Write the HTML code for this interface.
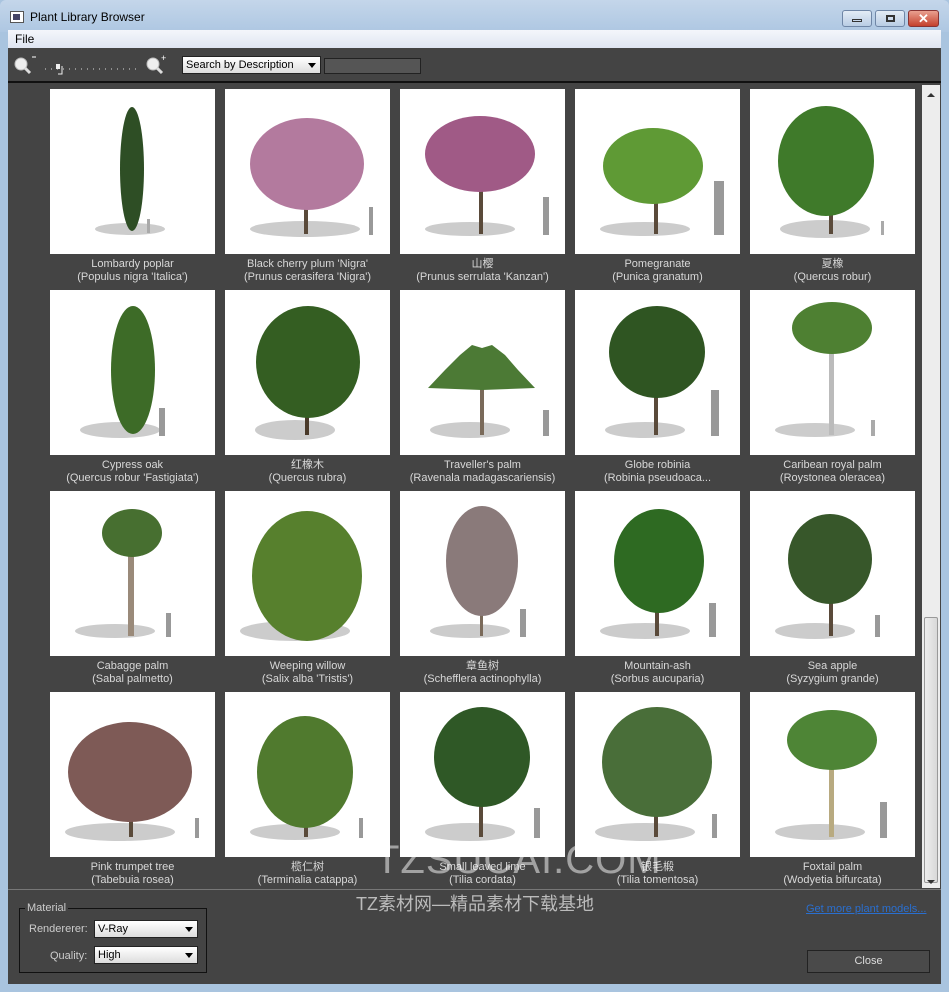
<!DOCTYPE html>
<html><head><meta charset="utf-8"><style>
*{margin:0;padding:0;box-sizing:border-box}
body{width:949px;height:992px;background:#a9c4df;font-family:"Liberation Sans","Noto Sans CJK SC",sans-serif;position:relative;overflow:hidden}
.a{position:absolute}
.title{left:0;top:0;width:949px;height:32px;background:linear-gradient(#c4d6ea,#aec7e2);border-radius:6px 6px 0 0}
.menu{left:8px;top:30px;width:933px;height:18px;background:linear-gradient(#f4f6fb,#dfe5f1);font-size:12px;padding:2px 0 0 7px;color:#000}
.main{left:8px;top:48px;width:933px;height:936px;background:#444}
.tile{position:absolute;width:165px;height:165px;background:#fff;overflow:hidden}
.lab{position:absolute;width:185px;text-align:center;color:#d8d8d8;font-size:11px;line-height:13px}
.sel{background:linear-gradient(#fff,#ddd);border:1px solid #222;color:#000;font-size:11px;padding:2px 3px;height:18px}
.arr{position:absolute;right:4px;top:6px;border-left:4px solid transparent;border-right:4px solid transparent;border-top:5px solid #000}
</style></head><body>
<div class="a title"></div>
<div class="a" style="left:10px;top:11px;width:14px;height:12px;background:#fff;border:1px solid #555"><div style="width:7px;height:6px;background:#446;margin:2px"></div></div>
<div class="a" style="left:30px;top:10px;font-size:12px;color:#000">Plant Library Browser</div>
<div class="a" style="left:842px;top:10px;width:30px;height:17px;border:1px solid #6f86a6;border-radius:3px;background:linear-gradient(#e3ecf6,#b9cde4)"><div style="width:10px;height:3px;border:1px solid #333;margin:8px auto"></div></div>
<div class="a" style="left:875px;top:10px;width:30px;height:17px;border:1px solid #6f86a6;border-radius:3px;background:linear-gradient(#e3ecf6,#b9cde4)"><div style="width:9px;height:7px;border:2px solid #333;margin:4px auto"></div></div>
<div class="a" style="left:908px;top:10px;width:31px;height:17px;border:1px solid #833;border-radius:3px;background:linear-gradient(#e9a090,#c4402c);color:#fff;font-size:13px;font-weight:bold;text-align:center;line-height:15px">✕</div>
<div class="a menu">File</div>
<div class="a main"></div>
<div class="a" style="left:8px;top:81px;width:933px;height:2px;background:#111"></div>
<!-- toolbar -->
<svg class="a" style="left:12px;top:54px" width="160" height="24"><circle cx="9" cy="10" r="6" fill="#eee" stroke="#bbb"/><line x1="13" y1="14" x2="18" y2="19" stroke="#ddd" stroke-width="3"/><line x1="20" y1="3" x2="24" y2="3" stroke="#fff"/>
<line x1="33" y1="15" x2="124" y2="15" stroke="#ddd" stroke-dasharray="1 5"/><rect x="44" y="10" width="4" height="5" fill="#eee"/><path d="M50 12 V20 H46" stroke="#eee" fill="none"/>
<circle cx="141" cy="10" r="6" fill="#eee" stroke="#bbb"/><line x1="145" y1="14" x2="150" y2="19" stroke="#ddd" stroke-width="3"/><text x="149" y="7" fill="#fff" font-size="9">+</text>
<line x1="166" y1="4" x2="166" y2="22" stroke="#ccc"/></svg>
<div class="a sel" style="left:182px;top:56px;width:139px;">Search by Description<div class="arr"></div></div>
<div class="a" style="left:324px;top:58px;width:97px;height:16px;background:#555;border:1px solid #222"></div>
<!-- scrollbar -->
<div class="a" style="left:922px;top:85px;width:18px;height:803px;background:#ededed"></div>
<div class="a" style="left:924px;top:617px;width:14px;height:266px;background:linear-gradient(90deg,#eee,#d8d8d8);border:1px solid #999;border-radius:2px"></div>
<div class="a" style="left:927px;top:93px;border-left:4px solid transparent;border-right:4px solid transparent;border-bottom:4px solid #333"></div>
<div class="a" style="left:927px;top:880px;border-left:4px solid transparent;border-right:4px solid transparent;border-top:4px solid #333"></div>
<div class="a" style="left:8px;top:889px;width:933px;height:1px;background:#777"></div>

<div class="a" style="left:0;top:0">
<!-- row1 -->
<div class="tile" style="left:50px;top:89px"><svg width="165" height="165"><ellipse cx="80" cy="140" rx="35" ry="6" fill="#ccc"/><ellipse cx="82" cy="80" rx="12" ry="62" fill="#2e4e25"/><rect x="97" y="130" width="3" height="14" fill="#aaa"/></svg></div>
<div class="tile" style="left:225px;top:89px"><svg width="165" height="165"><ellipse cx="80" cy="140" rx="55" ry="8" fill="#ccc"/><rect x="79" y="90" width="4" height="55" fill="#5a4a3a"/><ellipse cx="82" cy="75" rx="57" ry="46" fill="#b37a9e"/><rect x="144" y="118" width="4" height="28" fill="#999"/></svg></div>
<div class="tile" style="left:400px;top:89px"><svg width="165" height="165"><ellipse cx="70" cy="140" rx="45" ry="7" fill="#ccc"/><rect x="79" y="90" width="4" height="55" fill="#5a4a3a"/><ellipse cx="80" cy="65" rx="55" ry="38" fill="#a05a86"/><rect x="143" y="108" width="6" height="38" fill="#999"/></svg></div>
<div class="tile" style="left:575px;top:89px"><svg width="165" height="165"><ellipse cx="70" cy="140" rx="45" ry="7" fill="#ccc"/><rect x="79" y="90" width="4" height="55" fill="#5a4a3a"/><ellipse cx="78" cy="77" rx="50" ry="38" fill="#5f9a35"/><rect x="139" y="92" width="10" height="54" fill="#999"/></svg></div>
<div class="tile" style="left:750px;top:89px"><svg width="165" height="165"><ellipse cx="75" cy="140" rx="45" ry="9" fill="#ccc"/><rect x="79" y="90" width="4" height="55" fill="#5a4a3a"/><ellipse cx="76" cy="72" rx="48" ry="55" fill="#3f7a2a"/><rect x="131" y="132" width="3" height="14" fill="#aaa"/></svg></div>
<!-- row2 -->
<div class="tile" style="left:50px;top:290px"><svg width="165" height="165"><ellipse cx="70" cy="140" rx="40" ry="8" fill="#ccc"/><ellipse cx="83" cy="80" rx="22" ry="64" fill="#3d6b27"/><rect x="109" y="118" width="6" height="28" fill="#999"/></svg></div>
<div class="tile" style="left:225px;top:290px"><svg width="165" height="165"><ellipse cx="70" cy="140" rx="40" ry="10" fill="#ccc"/><rect x="80" y="90" width="4" height="55" fill="#4a3a2a"/><ellipse cx="83" cy="72" rx="52" ry="56" fill="#345e22"/></svg></div>
<div class="tile" style="left:400px;top:290px"><svg width="165" height="165"><ellipse cx="70" cy="140" rx="40" ry="8" fill="#ccc"/><rect x="80" y="95" width="4" height="50" fill="#7a6a5a"/><path d="M82 100 L28 98 L45 80 L60 65 L72 55 L82 58 L92 55 L105 65 L118 80 L135 98Z" fill="#4c7a35"/><rect x="143" y="120" width="6" height="26" fill="#999"/></svg></div>
<div class="tile" style="left:575px;top:290px"><svg width="165" height="165"><ellipse cx="70" cy="140" rx="40" ry="8" fill="#ccc"/><rect x="79" y="90" width="4" height="55" fill="#5a4a3a"/><ellipse cx="82" cy="62" rx="48" ry="46" fill="#2f5522"/><rect x="136" y="100" width="8" height="46" fill="#999"/></svg></div>
<div class="tile" style="left:750px;top:290px"><svg width="165" height="165"><ellipse cx="65" cy="140" rx="40" ry="7" fill="#ccc"/><rect x="79" y="45" width="5" height="100" fill="#bbb"/><ellipse cx="82" cy="38" rx="40" ry="26" fill="#4e8032"/><rect x="121" y="130" width="4" height="16" fill="#aaa"/></svg></div>
<!-- row3 -->
<div class="tile" style="left:50px;top:491px"><svg width="165" height="165"><ellipse cx="65" cy="140" rx="40" ry="7" fill="#ccc"/><rect x="78" y="45" width="6" height="100" fill="#9a8a7a"/><ellipse cx="82" cy="42" rx="30" ry="24" fill="#476f30"/><rect x="116" y="122" width="5" height="24" fill="#999"/></svg></div>
<div class="tile" style="left:225px;top:491px"><svg width="165" height="165"><ellipse cx="70" cy="140" rx="55" ry="10" fill="#ccc"/><rect x="80" y="90" width="4" height="55" fill="#5a4a3a"/><ellipse cx="82" cy="85" rx="55" ry="65" fill="#57802d"/></svg></div>
<div class="tile" style="left:400px;top:491px"><svg width="165" height="165"><ellipse cx="70" cy="140" rx="40" ry="7" fill="#ccc"/><rect x="80" y="80" width="3" height="65" fill="#7a6a5a"/><ellipse cx="82" cy="70" rx="36" ry="55" fill="#8a7a7a"/><rect x="120" y="118" width="6" height="28" fill="#999"/></svg></div>
<div class="tile" style="left:575px;top:491px"><svg width="165" height="165"><ellipse cx="70" cy="140" rx="45" ry="8" fill="#ccc"/><rect x="80" y="90" width="4" height="55" fill="#5a4a3a"/><ellipse cx="84" cy="70" rx="45" ry="52" fill="#2e6a22"/><rect x="134" y="112" width="7" height="34" fill="#999"/></svg></div>
<div class="tile" style="left:750px;top:491px"><svg width="165" height="165"><ellipse cx="65" cy="140" rx="40" ry="8" fill="#ccc"/><rect x="79" y="90" width="4" height="55" fill="#5a4a3a"/><ellipse cx="80" cy="68" rx="42" ry="45" fill="#37572a"/><rect x="125" y="124" width="5" height="22" fill="#999"/></svg></div>
<!-- row4 -->
<div class="tile" style="left:50px;top:692px"><svg width="165" height="165"><ellipse cx="70" cy="140" rx="55" ry="9" fill="#ccc"/><rect x="79" y="90" width="4" height="55" fill="#5a4a3a"/><ellipse cx="80" cy="80" rx="62" ry="50" fill="#7e5a56"/><rect x="145" y="126" width="4" height="20" fill="#999"/></svg></div>
<div class="tile" style="left:225px;top:692px"><svg width="165" height="165"><ellipse cx="70" cy="140" rx="45" ry="8" fill="#ccc"/><rect x="79" y="70" width="4" height="75" fill="#5a4a3a"/><ellipse cx="80" cy="80" rx="48" ry="56" fill="#507a2e"/><rect x="134" y="126" width="4" height="20" fill="#999"/></svg></div>
<div class="tile" style="left:400px;top:692px"><svg width="165" height="165"><ellipse cx="70" cy="140" rx="45" ry="9" fill="#ccc"/><rect x="79" y="90" width="4" height="55" fill="#5a4a3a"/><ellipse cx="82" cy="65" rx="48" ry="50" fill="#2f5826"/><rect x="134" y="116" width="6" height="30" fill="#999"/></svg></div>
<div class="tile" style="left:575px;top:692px"><svg width="165" height="165"><ellipse cx="70" cy="140" rx="50" ry="9" fill="#ccc"/><rect x="79" y="90" width="4" height="55" fill="#5a4a3a"/><ellipse cx="82" cy="70" rx="55" ry="55" fill="#496e39"/><rect x="137" y="122" width="5" height="24" fill="#999"/></svg></div>
<div class="tile" style="left:750px;top:692px"><svg width="165" height="165"><ellipse cx="70" cy="140" rx="45" ry="8" fill="#ccc"/><rect x="79" y="50" width="5" height="95" fill="#b8aa80"/><ellipse cx="82" cy="48" rx="45" ry="30" fill="#4e8536"/><rect x="130" y="110" width="7" height="36" fill="#999"/></svg></div>

<div class="lab" style="left:40px;top:258px">Lombardy poplar<br>(Populus nigra 'Italica')</div>
<div class="lab" style="left:215px;top:258px">Black cherry plum 'Nigra'<br>(Prunus cerasifera 'Nigra')</div>
<div class="lab" style="left:390px;top:258px">山樱<br>(Prunus serrulata 'Kanzan')</div>
<div class="lab" style="left:565px;top:258px">Pomegranate<br>(Punica granatum)</div>
<div class="lab" style="left:740px;top:258px">夏橡<br>(Quercus robur)</div>
<div class="lab" style="left:40px;top:459px">Cypress oak<br>(Quercus robur 'Fastigiata')</div>
<div class="lab" style="left:215px;top:459px">红橡木<br>(Quercus rubra)</div>
<div class="lab" style="left:390px;top:459px">Traveller's palm<br>(Ravenala madagascariensis)</div>
<div class="lab" style="left:565px;top:459px">Globe robinia<br>(Robinia pseudoaca...</div>
<div class="lab" style="left:740px;top:459px">Caribean royal palm<br>(Roystonea oleracea)</div>
<div class="lab" style="left:40px;top:660px">Cabagge palm<br>(Sabal palmetto)</div>
<div class="lab" style="left:215px;top:660px">Weeping willow<br>(Salix alba 'Tristis')</div>
<div class="lab" style="left:390px;top:660px">章鱼树<br>(Schefflera actinophylla)</div>
<div class="lab" style="left:565px;top:660px">Mountain-ash<br>(Sorbus aucuparia)</div>
<div class="lab" style="left:740px;top:660px">Sea apple<br>(Syzygium grande)</div>
<div class="lab" style="left:40px;top:861px">Pink trumpet tree<br>(Tabebuia rosea)</div>
<div class="lab" style="left:215px;top:861px">榄仁树<br>(Terminalia catappa)</div>
<div class="lab" style="left:390px;top:861px">Small leaved lime<br>(Tilia cordata)</div>
<div class="lab" style="left:565px;top:861px">银毛椴<br>(Tilia tomentosa)</div>
<div class="lab" style="left:740px;top:861px">Foxtail palm<br>(Wodyetia bifurcata)</div>
</div>
<div class="a" style="left:8px;top:890px;width:914px;height:94px;background:#444"></div>
<div class="a" style="left:8px;top:889px;width:933px;height:1px;background:#777"></div>
<!-- watermark -->
<div class="a" style="left:375px;top:838px;font-size:40px;color:rgba(255,255,255,0.5);letter-spacing:1px">TZSUCAI.COM</div>
<div class="a" style="left:210px;top:890px;width:530px;text-align:center;font-size:18px;color:#bbb">TZ素材网—精品素材下载基地</div>
<!-- bottom panel -->
<div class="a" style="left:19px;top:908px;width:188px;height:65px;border:1px solid #111"></div>
<div class="a" style="left:25px;top:902px;background:#444;color:#ccc;font-size:11px;padding:0 2px">Material</div>
<div class="a" style="left:29px;top:923px;color:#ccc;font-size:11px">Rendererer:</div>
<div class="a sel" style="left:94px;top:920px;width:104px">V-Ray<div class="arr"></div></div>
<div class="a" style="left:50px;top:950px;color:#ccc;font-size:11px">Quality:</div>
<div class="a sel" style="left:94px;top:946px;width:104px">High<div class="arr"></div></div>
<div class="a" style="left:806px;top:903px;color:#2a6fd0;font-size:11px;text-decoration:underline">Get more plant models...</div>
<div class="a" style="left:807px;top:950px;width:123px;height:23px;border:1px solid #222;background:#4a4a4a;color:#ddd;font-size:11px;text-align:center;line-height:21px">Close</div>
</body></html>
